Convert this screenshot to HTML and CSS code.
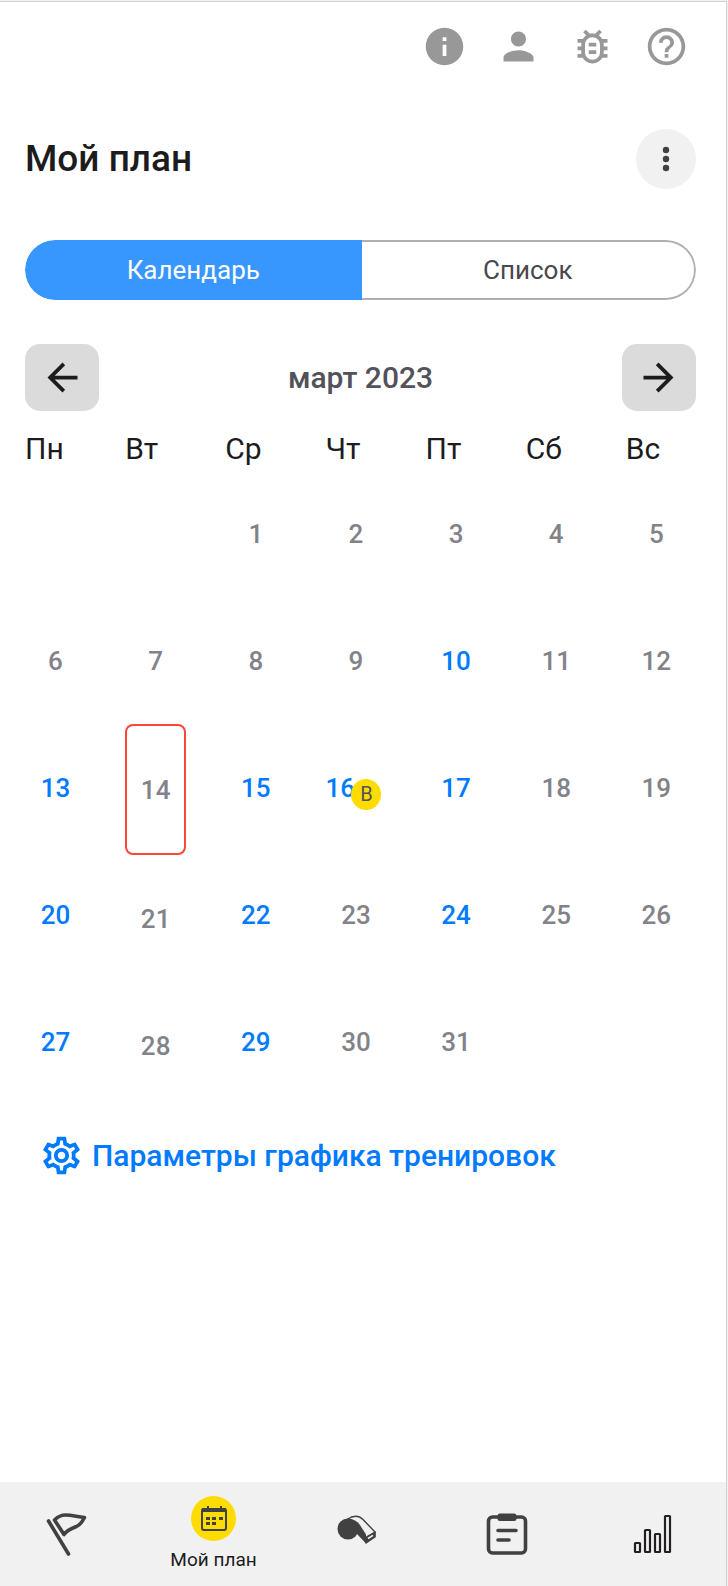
FILE: index.html
```html
<!DOCTYPE html>
<html lang="ru">
<head>
<meta charset="utf-8">
<meta name="viewport" content="width=device-width, initial-scale=1">
<title>Мой план</title>
<link rel="stylesheet" href="styles.css">
</head>
<body>
<div class="app">
  <header class="toolbar">
    <button class="tool" type="button" aria-label="Информация"><svg class="icon" viewBox="0 0 24 24"><path d="M12 2C6.48 2 2 6.48 2 12s4.480 10 10 10 10-4.480 10-10S17.520 2 12 2zm1 15h-2v-6h2v6zm0-8h-2V7h2v2z"/></svg></button>
    <button class="tool" type="button" aria-label="Профиль"><svg class="icon" viewBox="0 0 24 24"><path d="M12 12c2.210 0 4-1.790 4-4s-1.790-4-4-4-4 1.790-4 4 1.790 4 4 4zm0 2c-2.670 0-8 1.340-8 4v2h16v-2c0-2.660-5.330-4-8-4z"/></svg></button>
    <button class="tool" type="button" aria-label="Сообщить об ошибке"><svg class="icon" viewBox="0 0 24 24"><path d="M20 8h-2.810c-.45-.78-1.070-1.450-1.820-1.960L17 4.410 15.590 3l-2.170 2.170C12.960 5.060 12.490 5 12 5s-.96.060-1.410.17L8.410 3 7 4.410l1.620 1.630C7.880 6.550 7.260 7.220 6.810 8H4v2h2.090c-.05.33-.09.66-.09 1v1H4v2h2v1c0 .34.040.67.090 1H4v2h2.810c1.040 1.790 2.970 3 5.190 3s4.150-1.210 5.190-3H20v-2h-2.090c.05-.33.090-.66.090-1v-1h2v-2h-2v-1c0-.34-.04-.67-.09-1H20V8zm-4 7c0 2.210-1.790 4-4 4s-4-1.790-4-4v-4c0-2.210 1.790-4 4-4s4 1.790 4 4v4zm-6-1h4v2h-4v-2zm0-4h4v2h-4v-2z"/></svg></button>
    <button class="tool" type="button" aria-label="Помощь"><svg class="icon" viewBox="0 0 24 24"><path d="M11 18h2v-2h-2v2zm1-16C6.480 2 2 6.480 2 12s4.480 10 10 10 10-4.480 10-10S17.520 2 12 2zm0 18c-4.410 0-8-3.590-8-8s3.590-8 8-8 8 3.590 8 8-3.590 8-8 8zm0-14c-2.210 0-4 1.790-4 4h2c0-1.100.9-2 2-2s2 .9 2 2c0 2-3 1.750-3 5h2c0-2.250 3-2.500 3-5 0-2.210-1.790-4-4-4z"/></svg></button>
  </header>

  <main class="content">
    <div class="heading">
      <h1 class="title">Мой план</h1>
      <button class="more" type="button" aria-label="Ещё"><svg class="more-dots" viewBox="0 0 8 26"><circle cx="4" cy="4" r="3.200"/><circle cx="4" cy="13" r="3.200"/><circle cx="4" cy="22" r="3.200"/></svg></button>
    </div>

    <div class="segments">
      <button class="segment segment-active" type="button" aria-pressed="true">Календарь</button>
      <button class="segment" type="button" aria-pressed="false">Список</button>
    </div>

    <div class="month">
      <button class="step" type="button" aria-label="Предыдущий месяц"><svg class="icon" viewBox="0 0 24 24"><path d="M20 11H7.830l5.590-5.590L12 4l-8 8 8 8 1.410-1.410L7.830 13H20v-2z"/></svg></button>
      <h2 class="month-name">март 2023</h2>
      <button class="step" type="button" aria-label="Следующий месяц"><svg class="icon" viewBox="0 0 24 24"><path d="M12 4l-1.410 1.410L16.170 11H4v2h12.170l-5.580 5.590L12 20l8-8z"/></svg></button>
    </div>

    <div class="calendar">
      <section class="weekday">
        <h3 class="weekday-name">Пн</h3>
        <span class="day"></span>
        <button class="day" type="button">6</button>
        <button class="day day-planned" type="button">13</button>
        <button class="day day-planned" type="button">20</button>
        <button class="day day-planned" type="button">27</button>
      </section>
      <section class="weekday">
        <h3 class="weekday-name">Вт</h3>
        <span class="day"></span>
        <button class="day" type="button">7</button>
        <button class="day day-today" type="button" aria-current="date">14</button>
        <button class="day" type="button">21</button>
        <button class="day" type="button">28</button>
      </section>
      <section class="weekday">
        <h3 class="weekday-name">Ср</h3>
        <button class="day" type="button">1</button>
        <button class="day" type="button">8</button>
        <button class="day day-planned" type="button">15</button>
        <button class="day day-planned" type="button">22</button>
        <button class="day day-planned" type="button">29</button>
      </section>
      <section class="weekday">
        <h3 class="weekday-name">Чт</h3>
        <button class="day" type="button">2</button>
        <button class="day" type="button">9</button>
        <button class="day day-planned day-marked" type="button">16<span class="badge">В</span></button>
        <button class="day" type="button">23</button>
        <button class="day" type="button">30</button>
      </section>
      <section class="weekday">
        <h3 class="weekday-name">Пт</h3>
        <button class="day" type="button">3</button>
        <button class="day day-planned" type="button">10</button>
        <button class="day day-planned" type="button">17</button>
        <button class="day day-planned" type="button">24</button>
        <button class="day" type="button">31</button>
      </section>
      <section class="weekday">
        <h3 class="weekday-name">Сб</h3>
        <button class="day" type="button">4</button>
        <button class="day" type="button">11</button>
        <button class="day" type="button">18</button>
        <button class="day" type="button">25</button>
      </section>
      <section class="weekday">
        <h3 class="weekday-name">Вс</h3>
        <button class="day" type="button">5</button>
        <button class="day" type="button">12</button>
        <button class="day" type="button">19</button>
        <button class="day" type="button">26</button>
      </section>
    </div>

    <a class="settings" href="#settings">
      <svg class="icon" viewBox="0 0 24 24"><path d="M19.430 12.980c.04-.32.070-.64.070-.98 0-.34-.03-.66-.07-.98l2.110-1.650c.19-.15.240-.42.120-.64l-2-3.460c-.09-.16-.26-.25-.44-.25-.06 0-.12.010-.17.030l-2.490 1c-.52-.4-1.080-.73-1.690-.98l-.38-2.650C14.460 2.180 14.250 2 14 2h-4c-.25 0-.46.180-.49.420l-.38 2.650c-.61.250-1.170.590-1.690.980l-2.490-1c-.06-.02-.12-.03-.18-.03-.17 0-.34.090-.43.250l-2 3.460c-.13.220-.07.490.12.640l2.110 1.650c-.04.320-.07.650-.07.980 0 .33.030.66.070.98l-2.110 1.650c-.19.150-.24.420-.12.640l2 3.460c.09.160.26.250.44.250.06 0 .12-.01.170-.03l2.490-1c.52.400 1.080.730 1.690.980l.38 2.650c.03.240.24.420.49.420h4c.25 0 .46-.18.49-.42l.38-2.650c.61-.25 1.170-.59 1.690-.98l2.490 1c.06.020.12.030.18.030.17 0 .34-.09.430-.25l2-3.460c.12-.22.070-.49-.12-.64l-2.110-1.650zm-1.980-1.710c.04.310.05.520.05.730 0 .21-.02.430-.05.730l-.14 1.130.89.700 1.080.840-.7 1.210-1.270-.51-1.040-.42-.9.680c-.43.320-.84.560-1.250.730l-1.060.43-.16 1.130-.2 1.350h-1.400l-.19-1.350-.16-1.130-1.060-.43c-.43-.18-.83-.41-1.230-.71l-.91-.7-1.060.43-1.270.51-.7-1.210 1.080-.84.89-.7-.14-1.130c-.03-.31-.05-.54-.05-.74s.02-.43.050-.73l.14-1.130-.89-.7-1.080-.84.7-1.210 1.270.51 1.040.42.900-.68c.43-.32.840-.56 1.250-.73l1.060-.43.160-1.130.2-1.350h1.390l.19 1.350.16 1.130 1.060.430c.43.180.83.410 1.230.710l.91.700 1.060-.43 1.270-.51.700 1.210-1.070.850-.89.700.14 1.130zM12 8c-2.210 0-4 1.790-4 4s1.790 4 4 4 4-1.790 4-4-1.790-4-4-4zm0 6c-1.100 0-2-.9-2-2s.9-2 2-2 2 .9 2 2-.9 2-2 2z"/></svg>
      <span>Параметры графика тренировок</span>
    </a>
  </main>

  <nav class="tabs">
    <a class="tab" href="#goals" aria-label="Цели"><svg class="tab-icon" viewBox="0 0 44 44"><g fill="none" stroke="#414141" stroke-width="3.600" stroke-linecap="round" stroke-linejoin="round"><path d="M3.500 9l20 33"/><path d="M9.500 8c3-3 6-5 11-5 7 0 12 2 19 2.500-2 4-4 7-8 9-5 2-9 3-12.500 8z"/></g></svg></a>
    <a class="tab" href="#plan" aria-current="page">
      <span class="tab-disc"><svg class="calendar-icon" viewBox="0 0 28 28"><path d="M7 1h2v4H7zM20 1h2v4h-2z" fill="#414141"/><rect x="2" y="4" width="24" height="21" rx="2" fill="none" stroke="#414141" stroke-width="2"/><path d="M2 3h24v4H2zM6 12h4v3H6zM12 12h4v3h-4zM19 12h4v3h-4zM6 17h4v3H6zM12 17h4v3h-4z" fill="#414141"/></svg></span>
      <span class="tab-label">Мой план</span>
    </a>
    <a class="tab" href="#coach" aria-label="Тренер"><svg class="tab-icon" viewBox="0 0 44 44"><path d="M9 7.500c6-4 12-4 16 0l12 12.500v5L28 31" fill="none" stroke="#414141" stroke-width="1.400"/><circle cx="10" cy="17" r="10.500" fill="#414141"/><path d="M10 6.500C15 7 19 9 22 13l6 9.500v9L19 22z" fill="#414141"/><path d="M27 25l10.500-6v5.500L27.500 32z" fill="#414141"/><path d="M30 26.500l5-3.200" stroke="#f1f1f1" stroke-width="1.600"/></svg></a>
    <a class="tab" href="#tasks" aria-label="Задания"><svg class="tab-icon" viewBox="0 0 44 44"><rect x="3.500" y="5" width="37" height="36" rx="4" fill="none" stroke="#414141" stroke-width="3.600"/><rect x="12.500" y="1.500" width="19" height="7.500" rx="2.500" fill="#414141"/><path d="M13 18.500h18M13 28h11" stroke="#414141" stroke-width="3.600" stroke-linecap="round"/></svg></a>
    <a class="tab" href="#stats" aria-label="Статистика"><svg class="tab-icon" viewBox="0 0 44 44"><g fill="none" stroke="#231f20" stroke-width="2.200"><rect x="4" y="31" width="5" height="9" rx=".5"/><rect x="14" y="18" width="5" height="22" rx=".5"/><rect x="24" y="22" width="5" height="18" rx=".5"/><rect x="34" y="4" width="5" height="36" rx=".5"/></g></svg></a>
  </nav>
</div>
</body>
</html>
```

FILE: styles.css
```css
* {
  box-sizing: border-box;
}

body {
  margin: 0;
  padding: 1px 1px 0 0;
  background: #f1f1f1;
  color: #1c1c1e;
  font-family: Roboto, "Liberation Sans", sans-serif;
}

button {
  margin: 0;
  padding: 0;
  border: 0;
  background: none;
  color: inherit;
  font: inherit;
  cursor: pointer;
}

a {
  color: inherit;
  text-decoration: none;
}

h1,
h2,
h3 {
  margin: 0;
  font-weight: 500;
}

svg {
  display: block;
}

.app {
  display: flex;
  flex-direction: column;
  min-height: calc(100vh - 1px);
  border-top: 1px solid #d1d1d1;
  border-right: 1px solid #d1d1d1;
  background: #fff;
}

.icon {
  width: 45px;
  height: 45px;
  fill: currentColor;
}

.toolbar {
  display: flex;
  justify-content: flex-end;
  padding: 22px 23px 0;
  color: #989898;
}

.tool {
  display: flex;
  justify-content: center;
  width: 74px;
}

.content {
  flex: 1;
  padding: 60px 30px 40px 25px;
}

.heading {
  display: flex;
  align-items: center;
  justify-content: space-between;
}

.title {
  font-size: 37px;
  line-height: 44px;
}

.more {
  display: grid;
  place-items: center;
  width: 60px;
  height: 60px;
  border-radius: 50%;
  background: #f1f1f1;
}

.more-dots {
  width: 8px;
  height: 26px;
  fill: #414141;
}

.segments {
  display: flex;
  height: 60px;
  margin-top: 51px;
  overflow: hidden;
  border-radius: 30px;
}

.segment {
  flex: 1 1 0;
  border: 2px solid #b0b0b0;
  border-left: 0;
  border-radius: 0 30px 30px 0;
  color: #48484f;
  font-size: 26px;
}

.segment-active {
  flex-basis: 4px;
  border: 0;
  border-radius: 30px 0 0 30px;
  background: #3897ff;
  color: #fff;
}

.month {
  display: flex;
  align-items: center;
  justify-content: space-between;
  margin-top: 44px;
}

.step {
  display: grid;
  place-items: center;
  width: 74px;
  height: 67px;
  border-radius: 15px;
  background: #dbdbdb;
}

.month-name {
  color: #52525a;
  font-size: 30px;
  line-height: 36px;
}

.calendar {
  display: grid;
  grid-template-columns: repeat(7, 1fr);
  margin: 20px -30px 0 0;
}

.weekday {
  display: flex;
  flex-direction: column;
  align-items: flex-start;
}

.weekday-name {
  margin-bottom: 3px;
  font-size: 30px;
  font-weight: 400;
  line-height: 36px;
}

.day {
  display: flex;
  align-items: center;
  justify-content: center;
  position: relative;
  width: 61px;
  height: 127px;
  color: #828289;
  font-size: 26px;
  font-weight: 500;
}

.day-planned {
  color: #007aff;
}

.day-today {
  height: 131px;
  border: 2px solid #ff453a;
  border-radius: 8px;
}

.day-marked {
  justify-content: flex-start;
}

.badge {
  position: absolute;
  top: 55px;
  left: 26px;
  width: 30px;
  height: 31px;
  border-radius: 50%;
  background: #ffdc00;
  color: #52525a;
  font-size: 20px;
  font-weight: 400;
  line-height: 31px;
  text-align: center;
}

.settings {
  display: inline-flex;
  align-items: center;
  gap: 8px;
  margin: 24px 0 0 14px;
  color: #007aff;
  font-size: 30px;
  font-weight: 500;
}

.tabs {
  display: grid;
  grid-template-columns: repeat(5, 44px);
  justify-content: space-between;
  min-height: 104px;
  padding: 0 51px 0 45px;
  background: #f1f1f1;
}

.tab {
  display: flex;
  flex-direction: column;
  align-items: center;
  justify-content: center;
  gap: 7px;
}

.tab-icon {
  width: 44px;
  height: 44px;
  overflow: visible;
}

.tab-disc {
  display: grid;
  place-items: center;
  width: 45px;
  height: 45px;
  border-radius: 50%;
  background: #ffdc00;
}

.calendar-icon {
  width: 28px;
  height: 28px;
}

.tab-label {
  color: #1c1c1e;
  font-size: 19px;
  line-height: 24px;
  white-space: nowrap;
}
```
